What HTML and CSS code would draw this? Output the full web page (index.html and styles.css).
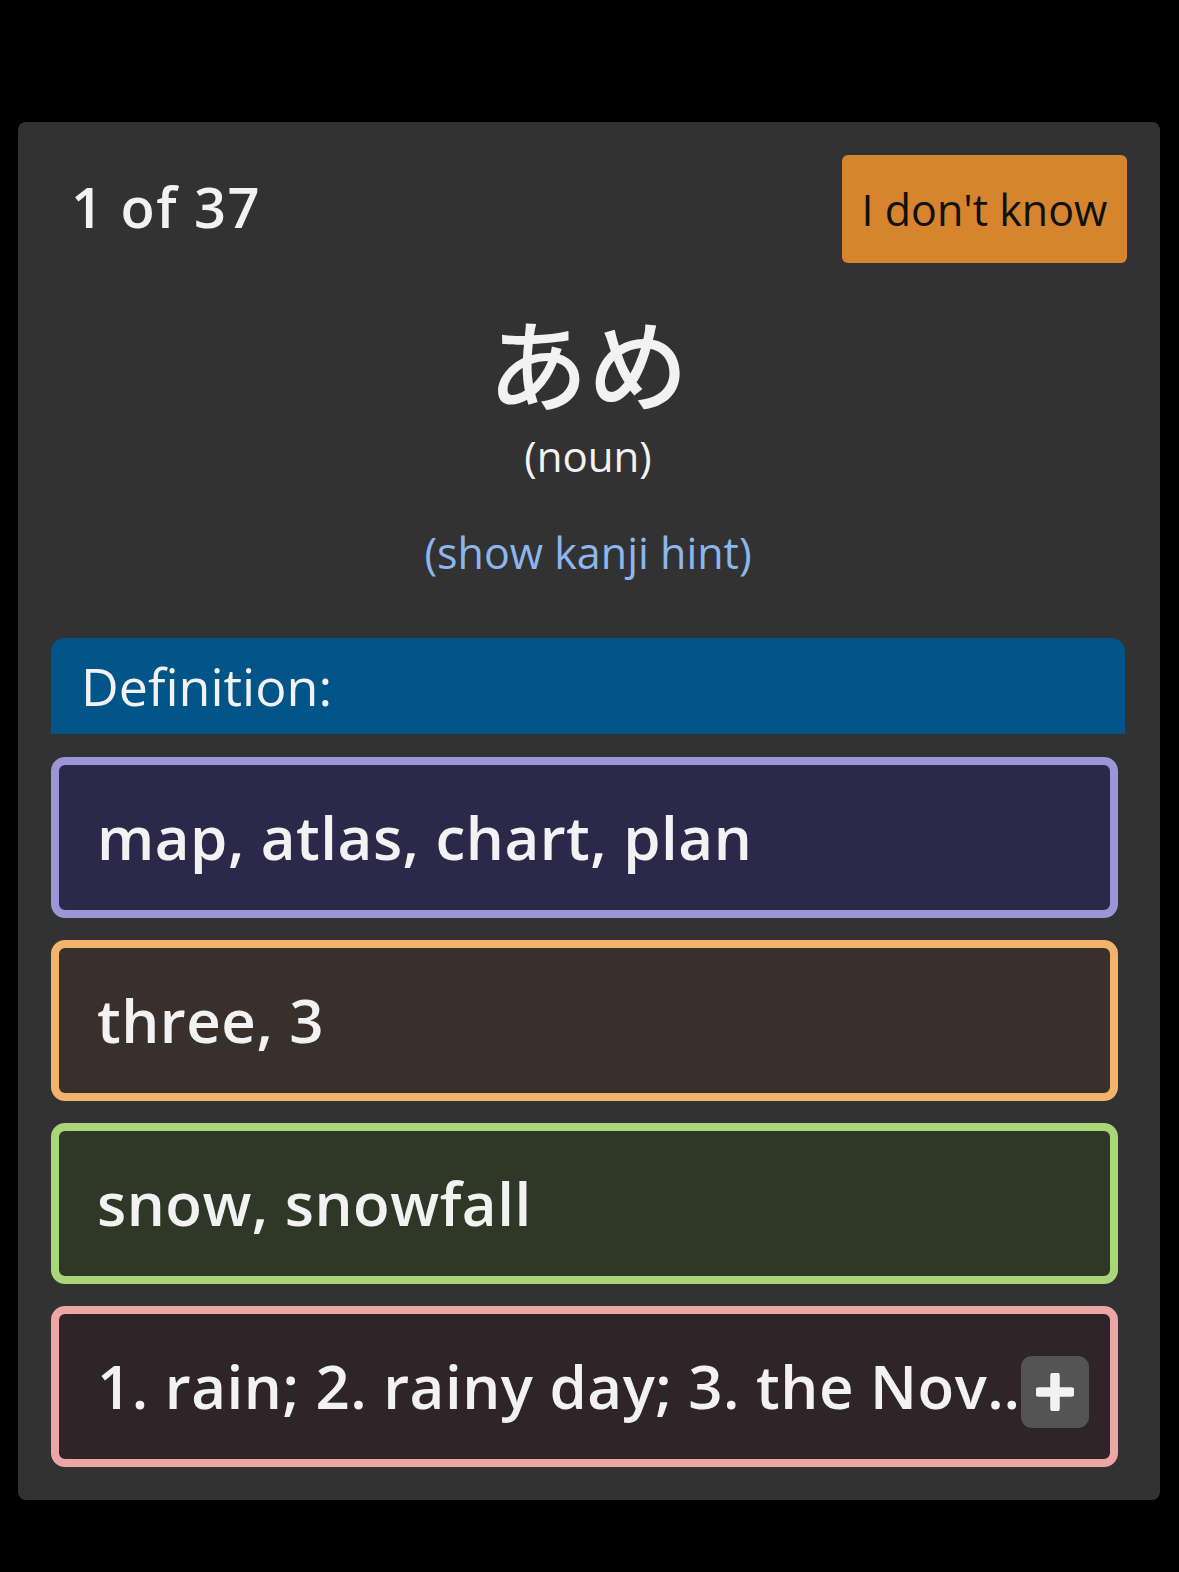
FILE: index.html
```html
<!DOCTYPE html>
<html lang="en">
<head>
<meta charset="utf-8">
<title>Quiz</title>
<link rel="stylesheet" href="styles.css">
</head>
<body>
<div class="card">
  <div class="top">
    <div class="count">1 of 37</div>
    <button class="dunno">I don't know</button>
  </div>
  <div class="word" lang="ja">あめ</div>
  <div class="pos">(noun)</div>
  <div class="hint">(show kanji hint)</div>
  <div class="defhead">Definition:</div>
  <div class="options">
    <div class="opt opt-purple"><span class="txt">map, atlas, chart, plan</span></div>
    <div class="opt opt-orange"><span class="txt">three, 3</span></div>
    <div class="opt opt-green"><span class="txt">snow, snowfall</span></div>
    <div class="opt opt-pink"><span class="txt">1. rain; 2. rainy day; 3. the November suit in hanafuda</span>
      <span class="more"><svg width="40" height="40" viewBox="0 0 40 40"><path d="M20 3 V37 M3 20 H37" stroke="#f2f2f2" stroke-width="10" stroke-linecap="round" fill="none"/></svg></span>
    </div>
  </div>
</div>
</body>
</html>
```
FILE: styles.css
```css
* { box-sizing: border-box; }
html, body { margin: 0; padding: 0; background: #000; }
body { font-family: "Open Sans", "Noto Sans", sans-serif; color: #f2f2f2; }
.card {
  margin: 122px 0 0 18px;
  width: 1142px;
  height: 1378px;
  background: #323232;
  border-radius: 8px;
  padding: 33px 35px 0 33px;
}
.top { display: flex; justify-content: space-between; align-items: center; height: 108px; }
.count { font-size: 56px; font-weight: 600; padding-left: 20px; line-height: 1; margin-top: -6px; letter-spacing: 1.5px; }
.dunno {
  width: 285px; height: 108px; margin-right: -2px;
  background: #d6842e; border: none; border-radius: 6px;
  font-family: "Open Sans", sans-serif; font-size: 43px; color: #111;
  padding: 0;
}
.word {
  text-align: center; font-family: "Noto Sans CJK JP", sans-serif;
  font-size: 100px; font-weight: 500; line-height: 1; margin-top: 48px;
}
.pos { text-align: center; font-size: 42px; line-height: 1.2; margin-top: 20px; }
.hint { text-align: center; font-size: 43px; line-height: 1.2; color: #8cb6ee; margin-top: 46px; }
.defhead {
  margin-top: 59px; height: 96px; background: #025588;
  border-radius: 14px 14px 0 0;
  font-size: 52px; display: flex; align-items: center; padding-left: 30px;
}
.options { display: flex; flex-direction: column; gap: 22px; margin-top: 23px; padding-right: 7px; }
.opt {
  position: relative; height: 161px; border: 8px solid; border-radius: 14px;
  display: flex; align-items: center; padding: 0 40px 0 38px;
  font-size: 60px; font-weight: 600; letter-spacing: 0.5px;
}
.txt { white-space: nowrap; overflow: hidden; text-overflow: ellipsis; }
.opt-purple { border-color: #9b96d8; background: #2c2849; }
.opt-orange { border-color: #f1b46a; background: #39302b; }
.opt-green { border-color: #aad67a; background: #2f3727; }
.opt-pink { border-color: #eda6a6; background: #2f2428; }
.more {
  position: absolute; right: 21px; top: 42px;
  width: 68px; height: 72px; border-radius: 11px; background: #545454;
  display: flex; align-items: center; justify-content: center;
}
.more svg { width: 38px; height: 38px; }
```
